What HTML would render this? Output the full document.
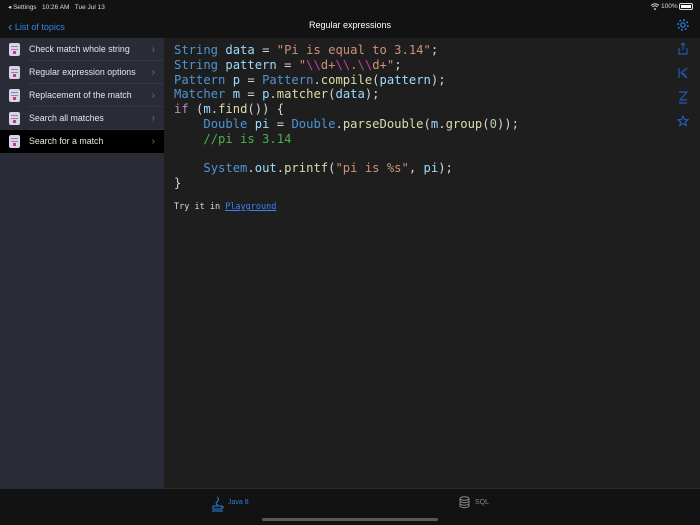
<!DOCTYPE html>
<html><head><meta charset="utf-8"><style>
*{margin:0;padding:0;box-sizing:border-box}
body{width:700px;height:525px;background:#1e1e1e;font-family:"Liberation Sans",sans-serif;position:relative;overflow:hidden;color:#fff}
.top{position:absolute;left:0;top:0;width:700px;height:38px;background:#121212}
.status{position:absolute;top:3px;font-size:6.5px;color:#ddd}
.side{position:absolute;left:0;top:38px;width:164px;height:450px;background:#292b37}
.row{height:23px;position:relative;font-size:8.8px;color:#e6e6e6;line-height:23px;padding-left:29px}
.row:after{content:"";position:absolute;left:28px;right:0;bottom:0;height:1px;background:#33353f}
.row.sel{background:#000}
.row.sel:after{display:none}
.ic{position:absolute;left:9px;top:5px;width:11px;height:13px;background:#d8d6e0;border-radius:2px}
.ic i{position:absolute;left:2px;right:2px;height:1px;background:#9a7bc0}
.ic b{position:absolute;left:4px;top:8px;width:3px;height:3px;background:#d03090}
.chev{position:absolute;right:9px;top:0;color:#777;font-size:10px}
pre{position:absolute;left:174px;top:43px;font-family:"DejaVu Sans Mono",monospace;font-size:12.2px;line-height:14.8px;color:#9cdcfe}
.t{color:#4f94d4}.s{color:#ce9178}.e{color:#c83ea8}.k{color:#c586c0}.m{color:#dcdcaa}.n{color:#b5cea8}.c{color:#4fae4f}.p{color:#d4d4d4}
.try{position:absolute;left:174px;top:202px;font-family:"DejaVu Sans Mono",monospace;font-size:8.5px;color:#ddd}
.try a{color:#3b82f6;text-decoration:underline}
.bot{position:absolute;left:0;top:488px;width:700px;height:37px;background:#121212;border-top:1px solid #2a2a2a}
</style></head><body>
<div class="top">
<div class="status" style="left:8px">◂ Settings&nbsp;&nbsp; 10:26 AM&nbsp;&nbsp; Tue Jul 13</div>
<div class="status" style="left:661px">100%</div>
<svg style="position:absolute;left:651px;top:3px" width="8" height="7" viewBox="0 0 8 7"><path d="M0 2.5Q4 -1 8 2.5M1.5 4Q4 1.5 6.5 4M3 5.5L4 6.5L5 5.5" stroke="#ddd" stroke-width="1" fill="none"/></svg>
<div style="position:absolute;left:679px;top:3px;width:14px;height:7px;border:1px solid #ddd;border-radius:2px;padding:1px"><div style="background:#fff;width:100%;height:100%"></div></div>
<div style="position:absolute;left:8px;top:18px;font-size:9px;color:#2f86e8"><span style="font-size:13px;position:relative;top:1px">‹</span> List of topics</div>
<div style="position:absolute;left:0;width:700px;text-align:center;top:20px;font-size:9px;color:#fff">Regular expressions</div>
<svg style="position:absolute;left:676px;top:18px" width="14" height="14" viewBox="0 0 14 14"><circle cx="7" cy="7" r="2.2" fill="none" stroke="#2f7ee0" stroke-width="1.2"/><circle cx="7" cy="7" r="5" fill="none" stroke="#2f7ee0" stroke-width="1.4" stroke-dasharray="2 1.9"/></svg>
</div>
<div class="side">
<div class="row"><span class="ic"><i style="top:3px"></i><i style="top:6px"></i><b></b></span>Check match whole string<span class="chev">›</span></div>
<div class="row"><span class="ic"><i style="top:3px"></i><i style="top:6px"></i><b></b></span>Regular expression options<span class="chev">›</span></div>
<div class="row"><span class="ic"><i style="top:3px"></i><i style="top:6px"></i><b></b></span>Replacement of the match<span class="chev">›</span></div>
<div class="row"><span class="ic"><i style="top:3px"></i><i style="top:6px"></i><b></b></span>Search all matches<span class="chev">›</span></div>
<div class="row sel"><span class="ic"><i style="top:3px"></i><i style="top:6px"></i><b></b></span>Search for a match<span class="chev">›</span></div>
</div>
<pre><span class="t">String</span> data <span class="p">=</span> <span class="s">"Pi is equal to 3.14"</span><span class="p">;</span>
<span class="t">String</span> pattern <span class="p">=</span> <span class="s">"</span><span class="e">\\</span><span class="s">d+</span><span class="e">\\</span><span class="s">.</span><span class="e">\\</span><span class="s">d+"</span><span class="p">;</span>
<span class="t">Pattern</span> p <span class="p">=</span> <span class="t">Pattern</span><span class="p">.</span><span class="m">compile</span><span class="p">(</span>pattern<span class="p">);</span>
<span class="t">Matcher</span> m <span class="p">=</span> p<span class="p">.</span><span class="m">matcher</span><span class="p">(</span>data<span class="p">);</span>
<span class="k">if</span> <span class="p">(</span>m<span class="p">.</span><span class="m">find</span><span class="p">()) {</span>
    <span class="t">Double</span> pi <span class="p">=</span> <span class="t">Double</span><span class="p">.</span><span class="m">parseDouble</span><span class="p">(</span>m<span class="p">.</span><span class="m">group</span><span class="p">(</span><span class="n">0</span><span class="p">));</span>
    <span class="c">//pi is 3.14</span>

    <span class="t">System</span><span class="p">.</span>out<span class="p">.</span><span class="m">printf</span><span class="p">(</span><span class="s">"pi is %s"</span><span class="p">,</span> pi<span class="p">);</span>
<span class="p">}</span></pre>
<div class="try">Try it in <a>Playground</a></div>
<svg style="position:absolute;left:677px;top:42px" width="12" height="100" viewBox="0 0 12 100" fill="none" stroke="#1f5bb0" stroke-width="1.2">
<path d="M2 6V12H10V6M6 1V8M4 3L6 1L8 3"/>
<path d="M2 26V36M4 31L10 26M4 31L10 36M6 31L10 36"/>
<path d="M2 50H10L3 58H10M2 61H10"/>
<path d="M6 74L7.5 77.5L11 77.8L8.3 80L9.2 83.5L6 81.5L2.8 83.5L3.7 80L1 77.8L4.5 77.5Z"/>
</svg>
<div class="bot">
<svg style="position:absolute;left:211px;top:7px" width="14" height="16" viewBox="0 0 14 16" fill="none" stroke="#2f7ee0" stroke-width="1"><path d="M6 1Q9 3 6 6Q4 8 7 9M2 10H11V13H2ZM1 15H12M11 11H13"/></svg>
<div style="position:absolute;left:228px;top:10px;font-size:7px;color:#2f7ee0">Java 8</div>
<svg style="position:absolute;left:459px;top:7px" width="11" height="13" viewBox="0 0 11 13" fill="none" stroke="#888" stroke-width="1"><ellipse cx="5.5" cy="2.5" rx="4.5" ry="1.8"/><path d="M1 2.5V10.5Q5.5 13 10 10.5V2.5M1 5.5Q5.5 8 10 5.5M1 8Q5.5 10.5 10 8"/></svg>
<div style="position:absolute;left:475px;top:10px;font-size:7px;color:#888">SQL</div>
<div style="position:absolute;left:262px;top:29px;width:176px;height:3px;border-radius:2px;background:#5a5a5a"></div>
</div>
</body></html>
